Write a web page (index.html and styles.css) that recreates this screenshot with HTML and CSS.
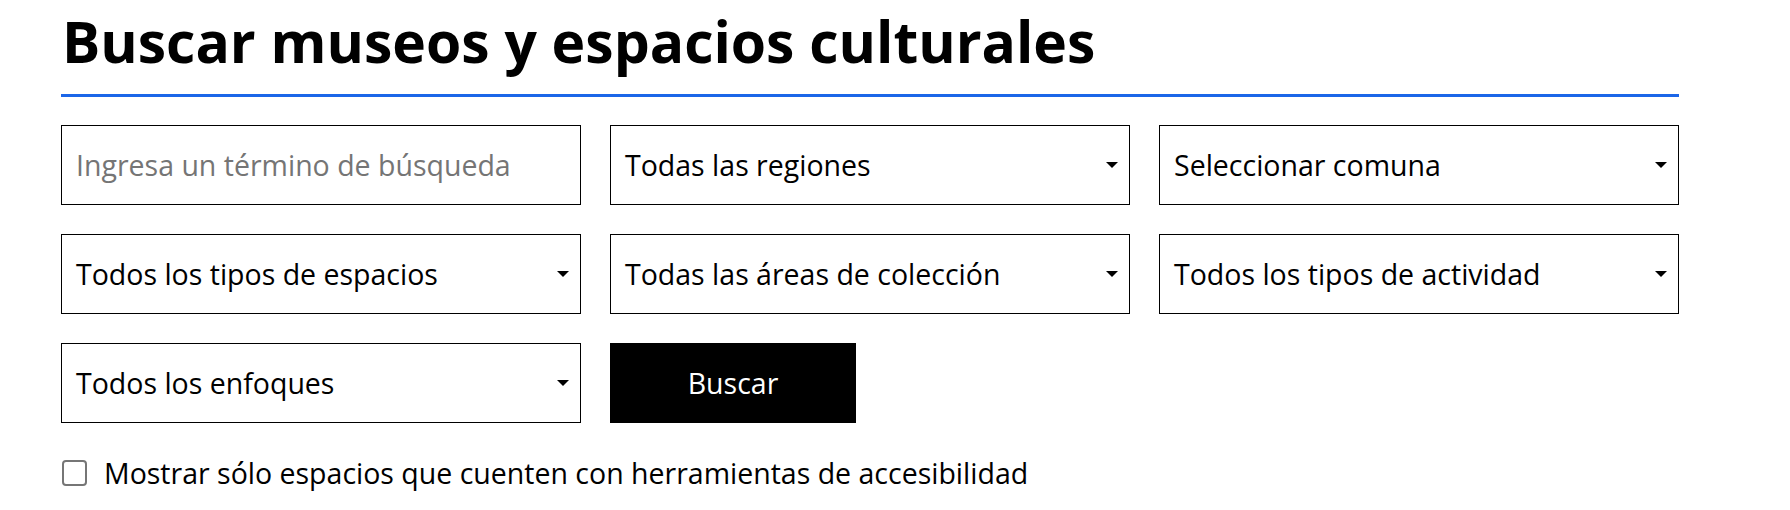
FILE: index.html
```html
<!DOCTYPE html>
<html lang="es">
<head>
<meta charset="utf-8">
<title>Buscar museos y espacios culturales</title>
<link rel="stylesheet" href="styles.css">
</head>
<body>
<main class="search">
  <h1 class="search__title">Buscar museos y espacios culturales</h1>
  <form class="search__form">
    <div class="grid">
      <input class="field field--text" type="text" placeholder="Ingresa un término de búsqueda">
      <div class="field field--select"><span>Todas las regiones</span><i class="caret"></i></div>
      <div class="field field--select"><span>Seleccionar comuna</span><i class="caret"></i></div>
      <div class="field field--select"><span>Todos los tipos de espacios</span><i class="caret"></i></div>
      <div class="field field--select"><span>Todas las áreas de colección</span><i class="caret"></i></div>
      <div class="field field--select"><span>Todos los tipos de actividad</span><i class="caret"></i></div>
      <div class="field field--select"><span>Todos los enfoques</span><i class="caret"></i></div>
      <div class="actions"><button class="btn" type="button">Buscar</button></div>
    </div>
    <label class="check"><span class="check__box"></span><span class="check__label">Mostrar sólo espacios que cuenten con herramientas de accesibilidad</span></label>
  </form>
</main>
</body>
</html>
```

FILE: styles.css
```css
* { box-sizing: border-box; }
html, body { margin: 0; padding: 0; background: #fff; }
body { font-family: "Open Sans", "Noto Sans", sans-serif; color: #000; }

.search { width: 1618px; margin-left: 61px; }

.search__title {
  margin: 0;
  padding-top: 3px;
  padding-bottom: 15px;
  font-size: 57px;
  font-weight: 700;
  line-height: 76px;
  border-bottom: 3px solid #1b66e8;
  padding-left: 1px;
}

.search__form { margin-top: 28px; }

.grid {
  display: grid;
  grid-template-columns: 520px 520px 520px;
  grid-auto-rows: 80px;
  column-gap: 29px;
  row-gap: 29px;
}

.field {
  height: 80px;
  border: 1px solid #000;
  background: #fff;
  font-family: "Open Sans", "Noto Sans", sans-serif;
  font-size: 28.5px;
  color: #000;
  padding: 0 14px;
}
.field--text { outline: none; width: 100%; }
.field--text::placeholder { color: #757575; opacity: 1; }

.field--select {
  display: flex;
  align-items: center;
  justify-content: space-between;
}
.caret {
  width: 0;
  height: 0;
  border-left: 6px solid transparent;
  border-right: 6px solid transparent;
  border-top: 6px solid #000;
  margin-right: -3px;
}

.actions { display: flex; }
.btn {
  width: 246px;
  height: 80px;
  background: #000;
  color: #fff;
  border: 0;
  font-family: "Open Sans", "Noto Sans", sans-serif;
  font-size: 28.5px;
  cursor: pointer;
}

.check {
  display: flex;
  align-items: center;
  gap: 17px;
  margin-top: 31px;
  margin-left: 1px;
  font-size: 28.5px;
}
.check__box {
  width: 25px;
  height: 26px;
  border: 2px solid #767676;
  border-radius: 4px;
  background: #fff;
}
```
